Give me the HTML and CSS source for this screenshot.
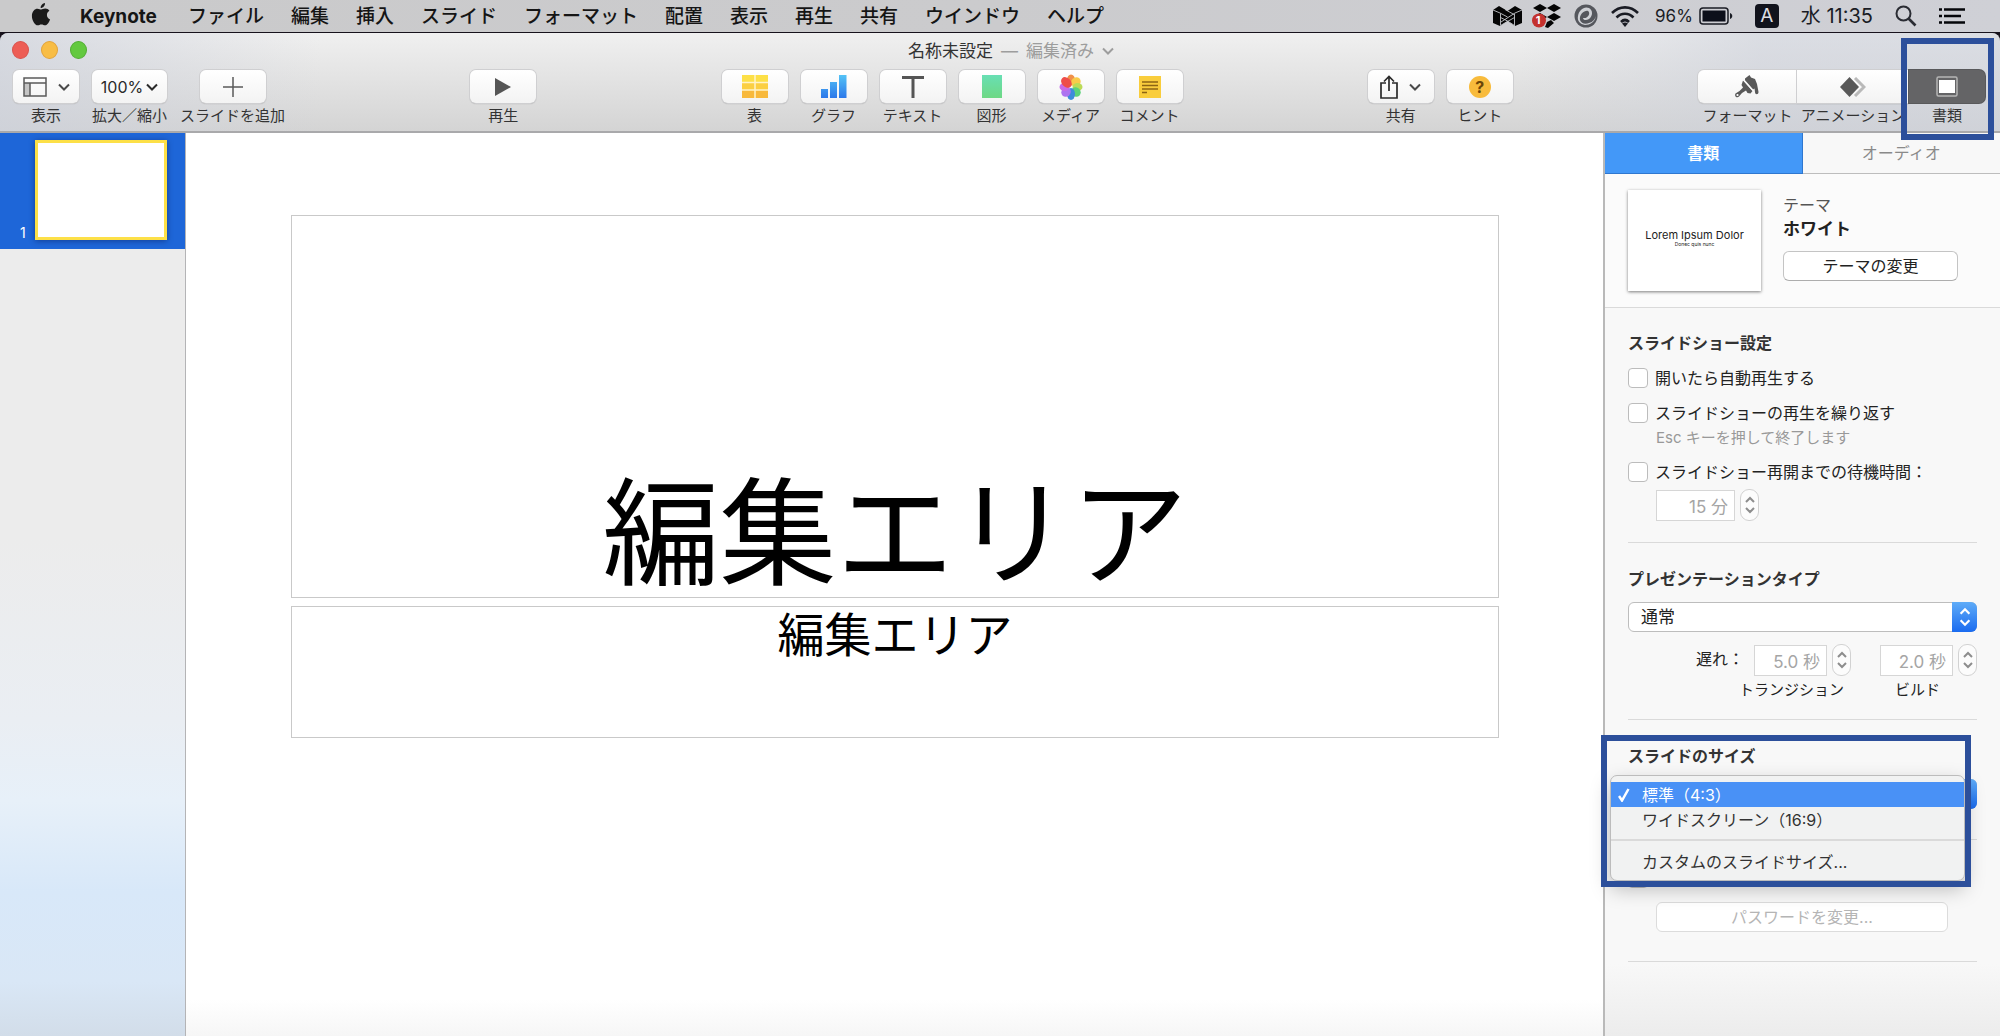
FILE: index.html
```html
<!DOCTYPE html>
<html lang="ja">
<head>
<meta charset="utf-8">
<meta name="viewport" content="width=device-width, initial-scale=1">
<title>名称未設定 — Keynote</title>
<link rel="stylesheet" href="styles.css">
</head>
<body>
<svg class="defs" aria-hidden="true">
  <symbol id="chevron" viewBox="0 0 12 8"><path d="M1 1.500l5 5 5-5" fill="none" stroke="currentColor" stroke-width="2"/></symbol>
  <symbol id="updown" viewBox="0 0 12 20"><path d="M2 7l4-4 4 4M2 13l4 4 4-4" fill="none" stroke="currentColor" stroke-width="2"/></symbol>
</svg>

<header class="menubar">
  <nav class="menus">
    <a class="apple" href="#" aria-label="アップルメニュー"><svg width="20" height="24" viewBox="0 0 20 24"><path d="M14 0c.2 2.700-2 5-4.300 5C9.400 2.600 11.700.4 14 0zM10.200 6.600c1 0 2.200-1 4.100-1 1.700 0 3.200.9 4.100 2.200-3.700 2.200-3 7.300.7 8.700-.7 2-2.700 5.800-5 5.800-1.400 0-2-.8-3.700-.8s-2.300.8-3.600.8C3.800 22.300.9 17.200.9 12.900c0-4.500 2.800-7.200 5.600-7.200 1.600 0 2.800.9 3.700.9z" fill="#1a1a1a"/></svg></a>
    <a class="app" href="#">Keynote</a>
    <a href="#">ファイル</a>
    <a href="#">編集</a>
    <a href="#">挿入</a>
    <a href="#">スライド</a>
    <a href="#">フォーマット</a>
    <a href="#">配置</a>
    <a href="#">表示</a>
    <a href="#">再生</a>
    <a href="#">共有</a>
    <a href="#">ウインドウ</a>
    <a href="#">ヘルプ</a>
  </nav>
  <div class="status">
    <div class="tray">
      <span><svg width="29" height="22" viewBox="0 0 29 22"><path d="M0 5l6-4 8.500 5L22 1l7 4v13l-7 3-7.500-5L7 21l-7-3z" fill="#050505"/><path d="M0 5l7 3 7.500 4M29 5l-7 3-14 9M12 4.500l9 5M7.500 12.500l7 3.500 7 4.500M7.500 20.500L21.500 12.500M7.500 8.500v12M21.500 9v12" fill="none" stroke="#c3c5ca" stroke-width=".9"/></svg></span>
      <span><svg width="30" height="26" viewBox="0 0 30 26"><path d="M8 1l7 4-7 4-7-4zM22 1l7 4-7 4-7-4zM22 10l7 4-7 4-7-4zM8 10l7 4-7 4-7-4zM15 19l4-2 3 3-6 5-3-1z" fill="#050505"/><circle cx="7" cy="17.500" r="7" fill="#c4312e"/></svg><b class="badge">1</b></span>
      <span><svg width="24" height="24" viewBox="0 0 24 24"><circle cx="12" cy="12" r="11.500" fill="#55575d"/><path d="M4 12C5 6 10 2 15 4c4 2 4 8 0 11-3 2-6 1-6-1 5 1 8-5 5-7-3-1-9 3-8 9 1 3 5 5 9 3 4-1 6-4 7-7-1 6-6 9-11 9-5-1-8-4-7-9z" fill="#cfd1d6"/></svg></span>
      <span><svg width="30" height="23" viewBox="0 0 30 23"><path d="M2 8c7.500-7.500 18.500-7.500 26 0M6.500 12.500c5-5 12-5 17 0M11 17c2.500-2.500 5.500-2.500 8 0" fill="none" stroke="#1a1c24" stroke-width="2.600"/><path d="M12 18.500L15 22l3-3.500c-2-1.500-4-1.500-6 0z" fill="#1a1c24"/></svg></span>
    </div>
    <div class="battery">96%<svg width="34" height="18" viewBox="0 0 34 18"><rect x="1" y="1" width="28" height="16" rx="3" fill="none" stroke="#1a1c24" stroke-width="1.500"/><rect x="3.500" y="3.500" width="23" height="11" fill="#0c0f1a"/><path d="M31 6c3 1 3 5 0 6z" fill="#1a1c24"/></svg></div>
    <span class="input-source">A</span>
    <span class="clock">水 11:35</span>
    <svg width="22" height="22" viewBox="0 0 22 22"><circle cx="8.500" cy="8.500" r="7" fill="none" stroke="#2a2c33" stroke-width="2"/><path d="M13.500 13.500l7 7" stroke="#2a2c33" stroke-width="2.600"/></svg>
    <svg width="27" height="16" viewBox="0 0 27 16"><path d="M0 1.500h3M0 8h3M0 14.500h3M5 1.500h21M5 8h17M5 14.500h21" stroke="#05060a" stroke-width="2.500"/></svg>
  </div>
</header>

<div class="window">
  <header class="chrome">
    <div class="titlebar">
      <div class="lights"><i class="close"></i><i class="minimize"></i><i class="zoom"></i></div>
      <h1>名称未設定<span class="dash">—</span><span>編集済み</span><svg width="12" height="8"><use href="#chevron"/></svg></h1>
    </div>
    <div class="toolbar">
      <div class="group">
        <div class="tool"><button type="button" aria-labelledby="t1"><svg width="24" height="20" viewBox="0 0 24 20"><path d="M1 6h6v13H1z" fill="#c4c4c4"/><path d="M1 1h22v18H1zM1 6h22M7 6v13" fill="none" stroke="#5a5a5a" stroke-width="1.500"/></svg><svg class="caret" width="12" height="8"><use href="#chevron"/></svg></button><span id="t1">表示</span></div>
        <div class="tool wide"><button type="button" aria-describedby="t2">100%<svg width="12" height="8"><use href="#chevron"/></svg></button><span id="t2">拡大／縮小</span></div>
        <div class="tool"><button type="button" aria-labelledby="t3"><svg width="20" height="20" viewBox="0 0 20 20"><path d="M10 0v20M0 10h20" stroke="#5a5a5a" stroke-width="1.500"/></svg></button><span id="t3">スライドを追加</span></div>
      </div>
      <div class="group">
        <div class="tool"><button type="button" aria-labelledby="t4"><svg width="16" height="18" viewBox="0 0 16 18"><path d="M0 0l16 9-16 9z" fill="#555"/></svg></button><span id="t4">再生</span></div>
      </div>
      <div class="group">
        <div class="tool"><button type="button" aria-labelledby="t5"><svg width="26" height="23" viewBox="0 0 26 23"><path d="M0 0h26v7.500H0z" fill="#fde047"/><path d="M0 7.500h26V15H0z" fill="#fbcf42"/><path d="M0 15h26v8H0z" fill="#f8b93c"/><path d="M0 7.500h26M0 15h26M13 0v23" stroke="#fff3c8" stroke-width="1.500"/></svg></button><span id="t5">表</span></div>
        <div class="tool"><button type="button" aria-labelledby="t6"><svg width="26" height="23" viewBox="0 0 26 23"><defs><linearGradient id="bars" gradientUnits="userSpaceOnUse" x1="0" y1="0" x2="0" y2="23"><stop offset="0" stop-color="#54c3f6"/><stop offset="1" stop-color="#2c78ea"/></linearGradient></defs><path d="M0 14h7v9H0zM9 7h7v16H9zM18 0h7.500v23H18z" fill="url(#bars)"/></svg></button><span id="t6">グラフ</span></div>
        <div class="tool"><button type="button" aria-labelledby="t7"><svg width="22" height="22" viewBox="0 0 22 22"><path d="M0 1.500h22M11 1v21" stroke="#555" stroke-width="3"/></svg></button><span id="t7">テキスト</span></div>
        <div class="tool"><button type="button" aria-labelledby="t8"><svg width="20" height="23" viewBox="0 0 20 23"><defs><linearGradient id="sq" x1="0" y1="0" x2="0" y2="1"><stop stop-color="#68dfb4"/><stop offset="1" stop-color="#6ed884"/></linearGradient></defs><rect width="20" height="23" fill="url(#sq)"/></svg></button><span id="t8">図形</span></div>
        <div class="tool"><button type="button" aria-labelledby="t9"><svg width="24" height="26" viewBox="-12 -13 24 26"><g opacity=".92"><ellipse cy="-7" rx="4" ry="5.500" fill="#f0883a"/><ellipse cy="-7" rx="4.500" ry="5" fill="#f8c83c" transform="rotate(45)"/><ellipse cy="-6.500" rx="4" ry="5" fill="#b6d94a" transform="rotate(90)"/><ellipse cy="-7" rx="4.500" ry="5" fill="#4fd06f" transform="rotate(135)"/><ellipse cy="-7" rx="4" ry="6" fill="#2f84d8" transform="rotate(180)"/><ellipse cy="-7" rx="4.500" ry="5" fill="#a768f0" transform="rotate(225)"/><ellipse cy="-6.500" rx="4" ry="5" fill="#c55fe6" transform="rotate(270)"/><ellipse cy="-6.500" rx="4.500" ry="6" fill="#ee3f3a" transform="rotate(315)"/></g></svg></button><span id="t9">メディア</span></div>
        <div class="tool"><button type="button" aria-labelledby="t10"><svg width="22" height="22" viewBox="0 0 22 22"><rect width="22" height="22" fill="#f9cd3c"/><path d="M3 6h16M3 9.500h16M3 13h16M3 16.500h5" stroke="#8c6514" stroke-width="1.500"/></svg></button><span id="t10">コメント</span></div>
      </div>
      <div class="group">
        <div class="tool"><button type="button" aria-labelledby="t11"><svg width="18" height="24" viewBox="0 0 18 24"><path d="M6 8H1v15h16V8h-5M9 16V2M4 6.500L9 1.500l5 5" fill="none" stroke="#2a2a2a" stroke-width="1.700"/></svg><svg class="caret" width="12" height="8"><use href="#chevron"/></svg></button><span id="t11">共有</span></div>
        <div class="tool"><button type="button" class="hint" aria-labelledby="t12"><b>?</b></button><span id="t12">ヒント</span></div>
      </div>
      <div class="segments">
        <div class="tool seg-format"><button type="button" aria-labelledby="t13"><svg width="24" height="23" viewBox="0 0 24 23"><path d="M10 3.500L14.500 0l1.500 2.500L20 4l2 5 1.500 8c0 3-3.500 3-3.500 0l-.5-3.500-1.500 1L10 6z" fill="#595959"/><path d="M8 5.500L17.500 16l-2 2.500-3-.5-1.500-2.500-4 2.500L4 21.500C2 23.500-1 21 .5 18.500L4.500 16 8 12.500 6.500 10z" fill="#595959"/><path d="M8.500 4.500l9.500 11" stroke="#f8f8f8" stroke-width="1.300"/><circle cx="2.500" cy="20" r="1.100" fill="#fff"/></svg></button><span id="t13">フォーマット</span></div>
        <div class="tool seg-animate"><button type="button" aria-labelledby="t14"><svg width="26" height="20" viewBox="0 0 26 20"><path d="M15 1l9 9-9 9" fill="none" stroke="#b9b9b9" stroke-width="3"/><path d="M9.500 0l9.500 10-9.500 10L0 10z" fill="#595959"/></svg></button><span id="t14">アニメーション</span></div>
        <div class="tool seg-document"><button type="button" aria-pressed="true" aria-labelledby="t15"><svg width="22" height="21" viewBox="0 0 22 21"><rect x="1" y="1" width="20" height="19" rx="1.500" fill="none" stroke="#b5b5b5" stroke-width="1.500"/><rect x="3" y="4" width="16" height="13" fill="#fff"/></svg></button><span id="t15">書類</span><div class="callout callout-document"></div></div>
      </div>
    </div>
  </header>

  <div class="workspace">
    <aside class="navigator">
      <div class="slide-item"><span>1</span><div class="slide-thumb"></div></div>
    </aside>

    <main class="canvas">
      <div class="placeholder title-box">編集エリア</div>
      <div class="placeholder body-box">編集エリア</div>
    </main>

    <aside class="inspector">
      <div class="tabs"><button type="button" class="active">書類</button><button type="button">オーディオ</button></div>
      <section class="theme">
        <div class="theme-thumb"><b>Lorem Ipsum Dolor</b><small>Donec quis nunc</small></div>
        <div class="theme-info"><span>テーマ</span><strong>ホワイト</strong><button type="button" class="push">テーマの変更</button></div>
      </section>
      <section class="pane slideshow">
        <h2>スライドショー設定</h2>
        <label class="check"><input type="checkbox">開いたら自動再生する</label>
        <label class="check"><input type="checkbox">スライドショーの再生を繰り返す</label>
        <p class="note">Esc キーを押して終了します</p>
        <label class="check"><input type="checkbox">スライドショー再開までの待機時間：</label>
        <div class="stepper indent"><input class="minutes" type="text" value="15 分" disabled aria-label="待機時間"><button type="button" disabled aria-label="増減"><svg width="12" height="20"><use href="#updown"/></svg></button></div>
      </section>
      <section class="pane presentation">
        <h2 id="ptype">プレゼンテーションタイプ</h2>
        <div class="select"><select aria-labelledby="ptype"><option>通常</option></select><i><svg width="14" height="22"><use href="#updown"/></svg></i></div>
        <div class="delays">
          <span>遅れ：</span>
          <div class="delay"><div class="stepper"><input id="tr" type="text" value="5.0 秒" disabled><button type="button" disabled aria-label="増減"><svg width="12" height="20"><use href="#updown"/></svg></button></div><label for="tr">トランジション</label></div>
          <div class="delay"><div class="stepper"><input id="bd" type="text" value="2.0 秒" disabled><button type="button" disabled aria-label="増減"><svg width="12" height="20"><use href="#updown"/></svg></button></div><label for="bd">ビルド</label></div>
        </div>
      </section>
      <section class="pane size">
        <h2 id="ssize">スライドのサイズ</h2>
        <div class="select"><select aria-labelledby="ssize"><option>標準（4:3）</option></select><i><svg width="14" height="22"><use href="#updown"/></svg></i></div>
        <div class="popup" role="menu">
          <button type="button" role="menuitem" class="chosen"><svg width="12" height="14" viewBox="0 0 12 14"><path d="M1 8l3 4.500L10.500 1" fill="none" stroke="#fff" stroke-width="2.500"/></svg>標準（4:3）</button>
          <button type="button" role="menuitem">ワイドスクリーン（16:9）</button>
          <hr>
          <button type="button" role="menuitem">カスタムのスライドサイズ...</button>
        </div>
        <div class="callout callout-size"></div>
      </section>
      <section class="pane password">
        <label class="check"><input type="checkbox">開くときにパスワードを要求</label>
        <button type="button" class="push indent" disabled>パスワードを変更...</button>
      </section>
    </aside>
  </div>
</div>
</body>
</html>
```
FILE: styles.css
```css
* { box-sizing: border-box; }
body {
  margin: 0;
  min-height: 100vh;
  display: flex;
  flex-direction: column;
  background: #17121c;
  color: #222;
  font: 16px/24px Inter, "Noto Sans CJK JP", sans-serif;
}
button, input, select { font: inherit; color: inherit; margin: 0; }
button { padding: 0; border: 0; background: none; }
svg { display: block; flex: none; }
.defs { position: absolute; width: 0; height: 0; }

/* System menu bar */
.menubar {
  display: flex;
  justify-content: space-between;
  align-items: center;
  height: 32px;
  padding: 0 34px 0 31px;
  background: linear-gradient(90deg, #cacacb, #cbcbcd 50%, #cfd0d6);
  font-size: 19px;
  white-space: nowrap;
}
.menus { display: flex; align-items: center; gap: 27px; padding-top: 2px; }
.menus a { color: #151515; text-decoration: none; font-weight: 500; }
.menus .apple { margin-bottom: 4px; }
.menus .app { font-weight: 700; margin: 0 4px 0 2px; }
.status { display: flex; align-items: center; gap: 22px; color: #1a1c24; }
.tray { display: flex; margin-right: -11px; }
.tray span { position: relative; width: 39px; display: flex; justify-content: center; align-items: center; }
.badge { position: absolute; left: 4px; top: 8px; width: 14px; color: #fff; font-size: 11px; line-height: 18px; text-align: center; }
.battery { display: flex; align-items: center; gap: 6px; font-size: 17px; }
.input-source { width: 24px; height: 24px; border-radius: 4px; background: #11131c; color: #dcdde2; line-height: 24px; text-align: center; }
.clock { font-size: 20px; }

/* Window */
.window { flex: 1; margin-top: 1px; display: flex; flex-direction: column; }
.chrome {
  position: relative;
  z-index: 1;
  height: 100px;
  border-bottom: 2px solid #a9a9ab;
  border-radius: 8px 8px 0 0;
  background:
    linear-gradient(90deg, rgba(205,209,219,.7), rgba(205,209,219,0) 16%, rgba(205,209,219,0) 76%, rgba(205,209,219,.6) 88%),
    linear-gradient(#f0f0f0, #d4d4d4);
}
.titlebar { height: 37px; display: flex; align-items: center; justify-content: center; }
.titlebar h1 { display: flex; align-items: center; margin: 0 0 2px 22px; font-size: 17px; font-weight: 400; line-height: 24px; color: #333; }
.titlebar h1 span, .titlebar h1 svg { color: #9d9d9d; }
.titlebar h1 .dash { margin: 0 8px; }
.titlebar h1 svg { margin-left: 8px; }
.lights { position: absolute; left: 12px; top: 8px; display: flex; gap: 12px; }
.lights i { width: 17px; height: 18px; border-radius: 50%; }
.close { background: #ed5d55; border: 1px solid #d9534d; }
.minimize { background: #f8bd45; border: 1px solid #e2a33a; }
.zoom { background: #63c93f; border: 1px solid #53ad35; }

.toolbar { display: flex; justify-content: space-between; padding: 0 15px 0 13px; }
.group { display: flex; gap: 13px; }
.tool { position: relative; display: flex; flex-direction: column; align-items: center; font-size: 15px; line-height: 24px; white-space: nowrap; color: #333; }
.tool > button {
  width: 66px;
  height: 33px;
  display: flex;
  align-items: center;
  justify-content: center;
  border-radius: 6px;
  background: linear-gradient(#fff, #f3f3f3);
  box-shadow: 0 0 0 1px #cfcfd1, 0 1px 1px #9c9c9c;
  color: #4a4a4a;
}
.tool > button + span { margin-top: 1px; }
.tool .caret { margin-left: 11px; }
.wide > button { width: 75px; font-size: 16px; color: #2a2a2a; gap: 3px; }
.hint b { width: 22px; height: 22px; border-radius: 50%; background: #f8bb3c; color: #6b4508; font-size: 16px; line-height: 22px; }
.segments { display: flex; }
.seg-format > button { width: 99px; border-radius: 6px 0 0 6px; }
.seg-animate > button { width: 112px; border-radius: 0; }
.seg-document > button { width: 76px; border-radius: 0 6px 6px 0; background: #646466; box-shadow: 0 0 0 1px #59595b; }

.callout { position: absolute; border: 6px solid #2c4f9b; pointer-events: none; z-index: 3; }
.callout-document { left: -8px; right: -9px; top: -32px; height: 102px; }

/* Work area */
.workspace { flex: 1; display: flex; }
.navigator { width: 186px; border-right: 1px solid #b4b4b6; background: linear-gradient(#ececec, #ececec 45%, #eaeef3 65%, #e7f0f9 74%, #d8e8f9 84%, #d9e7f6 94%, #d2dde9); }
.slide-item { height: 116px; padding: 7px 18px 9px 20px; display: flex; justify-content: space-between; align-items: flex-end; background: #1e66d8; color: #fff; font-size: 14px; line-height: 14px; }
.slide-thumb { width: 132px; height: 100px; border: 3px solid #fde047; background: #fff; box-shadow: 0 1px 6px rgba(0,0,50,.4); }
.canvas { flex: 1; padding: 82px 104px 0 105px; background: linear-gradient(#fff 96%, #f6f6f6); color: #000; text-align: center; font-family: "Noto Sans CJK JP", sans-serif; }
.placeholder { border: 1px solid #c9c9c9; font-weight: 400; }
.title-box { height: 383px; padding-bottom: 12px; display: flex; align-items: flex-end; justify-content: center; font-size: 117px; line-height: 120px; }
.body-box { height: 132px; margin-top: 8px; font-size: 47px; line-height: 50px; }

/* Inspector */
.inspector { width: 397px; border-left: 2px solid #b9b9b9; background: linear-gradient(#f8f8f8 92%, #ececec); }
.tabs { display: grid; grid-template-columns: 1fr 1fr; height: 41px; }
.tabs button { border-bottom: 1px solid #bdbdbd; color: #8a8a8a; background: #f8f8f8; }
.tabs .active { background: #4398f8; border-bottom: 1px solid #2f77cf; border-right: 1px solid #2f77cf; color: #fff; font-weight: 700; }
.theme { display: flex; gap: 22px; height: 134px; padding: 16px 23px; background: #fbfbfb; border-bottom: 1px solid #dadada; }
.theme-thumb { width: 133px; height: 101px; padding-top: 38px; background: #fff; box-shadow: 0 1px 3px rgba(0,0,0,.5); text-align: center; color: #222; }
.theme-thumb b, .theme-thumb small { display: block; font-weight: 400; font-size: 11px; line-height: 14px; white-space: nowrap; }
.theme-thumb small { font-size: 5px; line-height: 4px; }
.theme-info { display: flex; flex-direction: column; color: #555; padding-top: 3px; }
.theme-info strong { color: #222; font-size: 17px; }
.theme-info .push { width: 175px; margin-top: 10px; }
.push { height: 30px; border: 1px solid #c4c4c4; border-bottom-color: #adadad; border-radius: 6px; background: #fff; color: #222; }
.push:disabled { border-color: #dcdcdc; color: #b5b5b5; }
.pane { position: relative; margin: 0 23px; border-bottom: 1px solid #dadada; }
.pane h2 { margin: 0; font-size: 16px; line-height: 24px; font-weight: 700; color: #333; }
.slideshow { height: 235px; padding-top: 23px; }
.check { display: flex; align-items: center; gap: 7px; height: 24px; white-space: nowrap; }
.check input { appearance: none; flex: none; width: 20px; height: 20px; border: 1px solid #bcbcbc; border-radius: 4px; background: #fff; }
.slideshow .check { margin-top: 11px; }
.note { margin: 3px 0 0 28px; font-size: 15px; line-height: 20px; color: #999; }
.slideshow .note + .check { margin-top: 12px; }
.indent { margin-left: 28px; }
.stepper { display: flex; align-items: center; gap: 5px; }
.stepper.indent { margin-top: 5px; }
.stepper input { width: 73px; height: 31px; padding: 0 6px; border: 1px solid #d6d6d6; background: #fff; color: #a5a5a5; font-size: 17px; text-align: right; }
.stepper .minutes { width: 79px; }
.stepper button { width: 19px; height: 32px; display: flex; align-items: center; justify-content: center; border: 1px solid #d2d2d2; border-radius: 9px; background: #fcfcfc; color: #8d8d8d; }
.presentation { height: 177px; padding-top: 24px; }
.select { position: relative; height: 30px; }
.select select { appearance: none; width: 100%; height: 30px; padding: 0 12px; border: 1px solid #bdbdbd; border-radius: 6px; background: #fff; font-size: 17px; line-height: 24px; }
.select i { position: absolute; right: 0; top: 0; width: 25px; height: 30px; display: flex; align-items: center; justify-content: center; border-radius: 0 6px 6px 0; background: linear-gradient(#5facf8, #1a6bf0); color: #fff; }
.presentation .select { margin-top: 11px; }
.delays { display: flex; justify-content: flex-end; margin-top: 12px; }
.delays > span { line-height: 31px; margin-right: 10px; }
.delay + .delay { margin-left: 29px; }
.delay label { display: flex; justify-content: center; width: 75px; font-size: 15px; line-height: 28px; white-space: nowrap; }
.size { height: 120px; padding-top: 24px; }
.size .select { margin-top: 11px; }
.popup { position: absolute; z-index: 2; left: -18px; right: 12px; top: 55px; height: 106px; padding: 6px 0 0; border: 1px solid #bcbcbc; border-radius: 7px; background: #f1f2f2; box-shadow: 0 8px 20px rgba(0,0,0,.25); }
.popup button { display: flex; align-items: center; width: 100%; height: 25px; padding-left: 31px; color: #333; white-space: nowrap; }
.popup .chosen { padding-left: 7px; gap: 12px; background: #4991f6; color: #fff; }
.popup hr { margin: 7px 0 8px; border: 0; border-top: 2px solid #dadada; }
.callout-size { left: -27px; right: 6px; top: 15px; height: 152px; }
.password { height: 122px; padding-top: 26px; }
.password .push { display: block; width: 292px; margin-top: 12px; }
```
